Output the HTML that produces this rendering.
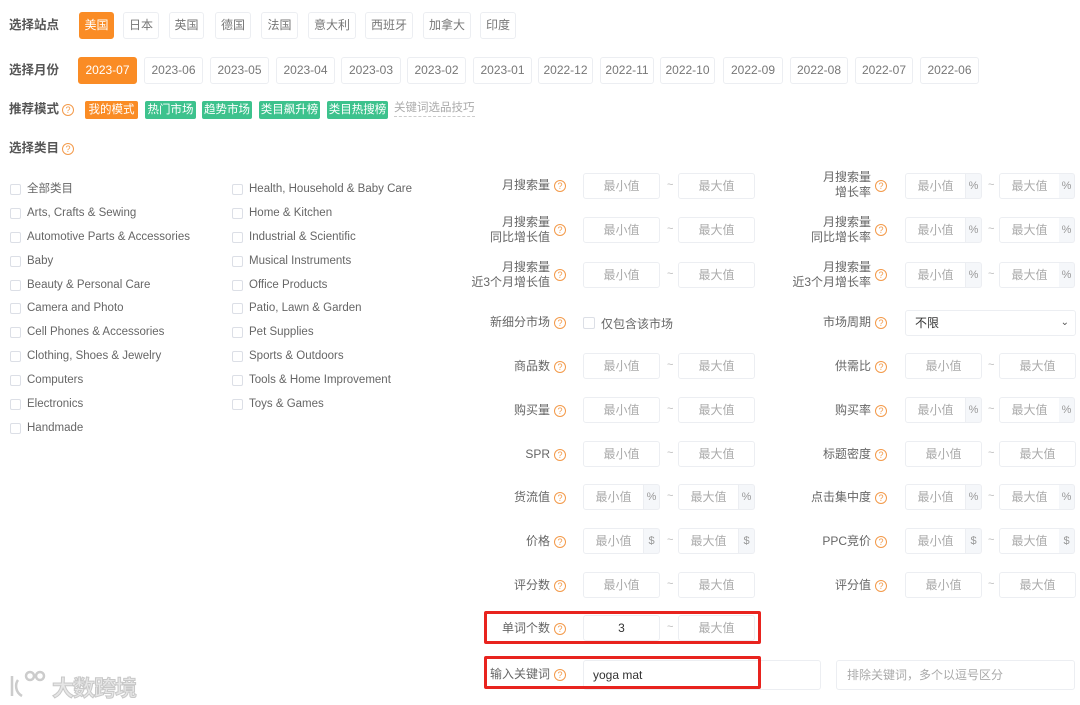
<!DOCTYPE html>
<html><head><meta charset="utf-8"><style>
*{box-sizing:border-box;margin:0;padding:0}
body{width:1080px;height:705px;background:#fff;position:relative;overflow:hidden;font-family:"Liberation Sans","Noto Sans CJK SC",sans-serif;color:#666;font-size:12px}
div,span{position:absolute}
.h{left:9px;font-size:12.5px;font-weight:bold;color:#555;line-height:16px}
.b{height:27px;border:1px solid #eceef2;border-radius:3px;line-height:25px;text-align:center;color:#777;font-size:12px}
.o{background:#fa8c25;border-color:#fa8c25;color:#fff}
.t{top:101px;height:18px;line-height:18px;color:#fff;font-size:11.5px;text-align:center;border-radius:2px;background:#3dc28d;white-space:nowrap;overflow:hidden}
.q{width:12px;height:12px;border:1px solid #f39a4a;border-radius:50%;color:#f39a4a;font-size:9px;line-height:10px;text-align:center}
.cb{width:11px;height:11px;border:1px solid #dcdfe6;border-radius:2px}
.c{font-size:11.5px;color:#666;font-family:"Liberation Sans","Noto Sans CJK SC",sans-serif;line-height:14px}
.ll{text-align:right;font-size:12px;color:#666;line-height:15px}
.in{height:26px;border:1px solid #eceef2;border-radius:3px;text-align:center;line-height:24px;color:#aaa;font-size:12px}
.ad{height:26px;width:16px;background:#f5f7fa;border:1px solid #eceef2;border-left:none;border-radius:0 3px 3px 0;text-align:center;line-height:24px;color:#999;font-size:11px}
.tl{color:#bbb;font-size:11px}
.red{border:3px solid #e8231e;border-radius:2px}
</style></head><body>
<div class="h" style="top:17px">选择站点</div>
<div class="b o" style="left:79px;top:12px;width:35px">美国</div>
<div class="b" style="left:123px;top:12px;width:36px">日本</div>
<div class="b" style="left:169px;top:12px;width:35px">英国</div>
<div class="b" style="left:215px;top:12px;width:36px">德国</div>
<div class="b" style="left:261px;top:12px;width:37px">法国</div>
<div class="b" style="left:308px;top:12px;width:48px">意大利</div>
<div class="b" style="left:365px;top:12px;width:48px">西班牙</div>
<div class="b" style="left:423px;top:12px;width:48px">加拿大</div>
<div class="b" style="left:480px;top:12px;width:36px">印度</div>

<div class="h" style="top:62px">选择月份</div>
<div class="b o" style="left:78px;top:57px;width:59px">2023-07</div>
<div class="b" style="left:144px;top:57px;width:59px">2023-06</div>
<div class="b" style="left:210px;top:57px;width:59px">2023-05</div>
<div class="b" style="left:276px;top:57px;width:59px">2023-04</div>
<div class="b" style="left:341px;top:57px;width:60px">2023-03</div>
<div class="b" style="left:407px;top:57px;width:59px">2023-02</div>
<div class="b" style="left:473px;top:57px;width:59px">2023-01</div>
<div class="b" style="left:538px;top:57px;width:55px">2022-12</div>
<div class="b" style="left:600px;top:57px;width:54px">2022-11</div>
<div class="b" style="left:660px;top:57px;width:55px">2022-10</div>
<div class="b" style="left:723px;top:57px;width:60px">2022-09</div>
<div class="b" style="left:790px;top:57px;width:58px">2022-08</div>
<div class="b" style="left:855px;top:57px;width:58px">2022-07</div>
<div class="b" style="left:920px;top:57px;width:59px">2022-06</div>

<div class="h" style="top:101px">推荐模式</div><div class="q" style="left:62px;top:104px">?</div>
<div class="t" style="left:85px;width:53px;background:#fa8c25">我的模式</div>
<div class="t" style="left:145px;width:51px">热门市场</div>
<div class="t" style="left:202px;width:50px">趋势市场</div>
<div class="t" style="left:259px;width:61px">类目飙升榜</div>
<div class="t" style="left:327px;width:61px">类目热搜榜</div>
<div style="left:394px;top:101px;color:#aaa;border-bottom:1px dashed #ccc;line-height:15px;font-size:11.5px">关键词选品技巧</div>

<div class="h" style="top:140px">选择类目</div><div class="q" style="left:62px;top:143px">?</div>

<div class="cb" style="left:10px;top:184px"></div><div class="c" style="left:27px;top:182px">全部类目</div>
<div class="cb" style="left:10px;top:208px"></div><div class="c" style="left:27px;top:206px">Arts, Crafts &amp; Sewing</div>
<div class="cb" style="left:10px;top:232px"></div><div class="c" style="left:27px;top:230px">Automotive Parts &amp; Accessories</div>
<div class="cb" style="left:10px;top:256px"></div><div class="c" style="left:27px;top:254px">Baby</div>
<div class="cb" style="left:10px;top:280px"></div><div class="c" style="left:27px;top:278px">Beauty &amp; Personal Care</div>
<div class="cb" style="left:10px;top:303px"></div><div class="c" style="left:27px;top:301px">Camera and Photo</div>
<div class="cb" style="left:10px;top:327px"></div><div class="c" style="left:27px;top:325px">Cell Phones &amp; Accessories</div>
<div class="cb" style="left:10px;top:351px"></div><div class="c" style="left:27px;top:349px">Clothing, Shoes &amp; Jewelry</div>
<div class="cb" style="left:10px;top:375px"></div><div class="c" style="left:27px;top:373px">Computers</div>
<div class="cb" style="left:10px;top:399px"></div><div class="c" style="left:27px;top:397px">Electronics</div>
<div class="cb" style="left:10px;top:423px"></div><div class="c" style="left:27px;top:421px">Handmade</div>
<div class="cb" style="left:232px;top:184px"></div><div class="c" style="left:249px;top:182px">Health, Household &amp; Baby Care</div>
<div class="cb" style="left:232px;top:208px"></div><div class="c" style="left:249px;top:206px">Home &amp; Kitchen</div>
<div class="cb" style="left:232px;top:232px"></div><div class="c" style="left:249px;top:230px">Industrial &amp; Scientific</div>
<div class="cb" style="left:232px;top:256px"></div><div class="c" style="left:249px;top:254px">Musical Instruments</div>
<div class="cb" style="left:232px;top:280px"></div><div class="c" style="left:249px;top:278px">Office Products</div>
<div class="cb" style="left:232px;top:303px"></div><div class="c" style="left:249px;top:301px">Patio, Lawn &amp; Garden</div>
<div class="cb" style="left:232px;top:327px"></div><div class="c" style="left:249px;top:325px">Pet Supplies</div>
<div class="cb" style="left:232px;top:351px"></div><div class="c" style="left:249px;top:349px">Sports &amp; Outdoors</div>
<div class="cb" style="left:232px;top:375px"></div><div class="c" style="left:249px;top:373px">Tools &amp; Home Improvement</div>
<div class="cb" style="left:232px;top:399px"></div><div class="c" style="left:249px;top:397px">Toys &amp; Games</div>

<div class="ll" style="right:530px;top:178px">月搜索量</div><div class="q" style="left:554px;top:180px">?</div>
<div class="in" style="left:583px;top:173px;width:77px">最小值</div><span class="tl" style="left:667px;top:179px">~</span><div class="in" style="left:678px;top:173px;width:77px">最大值</div>

<div class="ll" style="right:530px;top:215px">月搜索量<br>同比增长值</div><div class="q" style="left:554px;top:224px">?</div>
<div class="in" style="left:583px;top:217px;width:77px">最小值</div><span class="tl" style="left:667px;top:223px">~</span><div class="in" style="left:678px;top:217px;width:77px">最大值</div>

<div class="ll" style="right:530px;top:260px">月搜索量<br>近3个月增长值</div><div class="q" style="left:554px;top:269px">?</div>
<div class="in" style="left:583px;top:262px;width:77px">最小值</div><span class="tl" style="left:667px;top:268px">~</span><div class="in" style="left:678px;top:262px;width:77px">最大值</div>

<div class="ll" style="right:530px;top:315px">新细分市场</div><div class="q" style="left:554px;top:317px">?</div>
<div class="cb" style="left:583px;top:317px;width:12px;height:12px"></div><span style="left:601px;top:315px;color:#666">仅包含该市场</span>

<div class="ll" style="right:530px;top:359px">商品数</div><div class="q" style="left:554px;top:361px">?</div>
<div class="in" style="left:583px;top:353px;width:77px">最小值</div><span class="tl" style="left:667px;top:359px">~</span><div class="in" style="left:678px;top:353px;width:77px">最大值</div>

<div class="ll" style="right:530px;top:403px">购买量</div><div class="q" style="left:554px;top:405px">?</div>
<div class="in" style="left:583px;top:397px;width:77px">最小值</div><span class="tl" style="left:667px;top:403px">~</span><div class="in" style="left:678px;top:397px;width:77px">最大值</div>

<div class="ll" style="right:530px;top:447px">SPR</div><div class="q" style="left:554px;top:449px">?</div>
<div class="in" style="left:583px;top:441px;width:77px">最小值</div><span class="tl" style="left:667px;top:447px">~</span><div class="in" style="left:678px;top:441px;width:77px">最大值</div>

<div class="ll" style="right:530px;top:490px">货流值</div><div class="q" style="left:554px;top:492px">?</div>
<div class="in" style="left:583px;top:484px;width:61px;border-radius:3px 0 0 3px">最小值</div><div class="ad" style="left:644px;top:484px">%</div><span class="tl" style="left:667px;top:490px">~</span><div class="in" style="left:678px;top:484px;width:61px;border-radius:3px 0 0 3px">最大值</div><div class="ad" style="left:739px;top:484px">%</div>

<div class="ll" style="right:530px;top:534px">价格</div><div class="q" style="left:554px;top:536px">?</div>
<div class="in" style="left:583px;top:528px;width:61px;border-radius:3px 0 0 3px">最小值</div><div class="ad" style="left:644px;top:528px">$</div><span class="tl" style="left:667px;top:534px">~</span><div class="in" style="left:678px;top:528px;width:61px;border-radius:3px 0 0 3px">最大值</div><div class="ad" style="left:739px;top:528px">$</div>

<div class="ll" style="right:530px;top:578px">评分数</div><div class="q" style="left:554px;top:580px">?</div>
<div class="in" style="left:583px;top:572px;width:77px">最小值</div><span class="tl" style="left:667px;top:578px">~</span><div class="in" style="left:678px;top:572px;width:77px">最大值</div>

<div class="ll" style="right:530px;top:621px">单词个数</div><div class="q" style="left:554px;top:623px">?</div>
<div class="in" style="left:583px;top:615px;width:77px;color:#333">3</div><span class="tl" style="left:667px;top:621px">~</span><div class="in" style="left:678px;top:615px;width:77px">最大值</div>
<div class="red" style="left:484px;top:611px;width:277px;height:33px"></div>

<div class="ll" style="right:530px;top:667px">输入关键词</div><div class="q" style="left:554px;top:669px">?</div>
<div class="in" style="left:583px;top:660px;width:238px;height:30px;text-align:left;padding-left:9px;line-height:28px;color:#333">yoga mat</div>
<div class="in" style="left:836px;top:660px;width:239px;height:30px;text-align:left;padding-left:10px;line-height:28px">排除关键词，多个以逗号区分</div>
<div class="red" style="left:484px;top:656px;width:277px;height:33px"></div>

<div class="ll" style="right:209px;top:170px">月搜索量<br>增长率</div><div class="q" style="left:875px;top:180px">?</div>
<div class="in" style="left:905px;top:173px;width:61px;border-radius:3px 0 0 3px">最小值</div><div class="ad" style="left:966px;top:173px">%</div><span class="tl" style="left:988px;top:179px">~</span><div class="in" style="left:999px;top:173px;width:61px;border-radius:3px 0 0 3px">最大值</div><div class="ad" style="left:1059px;top:173px">%</div>

<div class="ll" style="right:209px;top:215px">月搜索量<br>同比增长率</div><div class="q" style="left:875px;top:224px">?</div>
<div class="in" style="left:905px;top:217px;width:61px;border-radius:3px 0 0 3px">最小值</div><div class="ad" style="left:966px;top:217px">%</div><span class="tl" style="left:988px;top:223px">~</span><div class="in" style="left:999px;top:217px;width:61px;border-radius:3px 0 0 3px">最大值</div><div class="ad" style="left:1059px;top:217px">%</div>

<div class="ll" style="right:209px;top:260px">月搜索量<br>近3个月增长率</div><div class="q" style="left:875px;top:269px">?</div>
<div class="in" style="left:905px;top:262px;width:61px;border-radius:3px 0 0 3px">最小值</div><div class="ad" style="left:966px;top:262px">%</div><span class="tl" style="left:988px;top:268px">~</span><div class="in" style="left:999px;top:262px;width:61px;border-radius:3px 0 0 3px">最大值</div><div class="ad" style="left:1059px;top:262px">%</div>

<div class="ll" style="right:209px;top:315px">市场周期</div><div class="q" style="left:875px;top:317px">?</div>
<div class="in" style="left:905px;top:310px;width:171px;height:26px;text-align:left;padding-left:9px;color:#333">不限<span style="right:6px;top:0;color:#555;font-size:10px">&#8964;</span></div>

<div class="ll" style="right:209px;top:359px">供需比</div><div class="q" style="left:875px;top:361px">?</div>
<div class="in" style="left:905px;top:353px;width:77px">最小值</div><span class="tl" style="left:988px;top:359px">~</span><div class="in" style="left:999px;top:353px;width:77px">最大值</div>

<div class="ll" style="right:209px;top:403px">购买率</div><div class="q" style="left:875px;top:405px">?</div>
<div class="in" style="left:905px;top:397px;width:61px;border-radius:3px 0 0 3px">最小值</div><div class="ad" style="left:966px;top:397px">%</div><span class="tl" style="left:988px;top:403px">~</span><div class="in" style="left:999px;top:397px;width:61px;border-radius:3px 0 0 3px">最大值</div><div class="ad" style="left:1059px;top:397px">%</div>

<div class="ll" style="right:209px;top:447px">标题密度</div><div class="q" style="left:875px;top:449px">?</div>
<div class="in" style="left:905px;top:441px;width:77px">最小值</div><span class="tl" style="left:988px;top:447px">~</span><div class="in" style="left:999px;top:441px;width:77px">最大值</div>

<div class="ll" style="right:209px;top:490px">点击集中度</div><div class="q" style="left:875px;top:492px">?</div>
<div class="in" style="left:905px;top:484px;width:61px;border-radius:3px 0 0 3px">最小值</div><div class="ad" style="left:966px;top:484px">%</div><span class="tl" style="left:988px;top:490px">~</span><div class="in" style="left:999px;top:484px;width:61px;border-radius:3px 0 0 3px">最大值</div><div class="ad" style="left:1059px;top:484px">%</div>

<div class="ll" style="right:209px;top:534px">PPC竞价</div><div class="q" style="left:875px;top:536px">?</div>
<div class="in" style="left:905px;top:528px;width:61px;border-radius:3px 0 0 3px">最小值</div><div class="ad" style="left:966px;top:528px">$</div><span class="tl" style="left:988px;top:534px">~</span><div class="in" style="left:999px;top:528px;width:61px;border-radius:3px 0 0 3px">最大值</div><div class="ad" style="left:1059px;top:528px">$</div>

<div class="ll" style="right:209px;top:578px">评分值</div><div class="q" style="left:875px;top:580px">?</div>
<div class="in" style="left:905px;top:572px;width:77px">最小值</div><span class="tl" style="left:988px;top:578px">~</span><div class="in" style="left:999px;top:572px;width:77px">最大值</div>

<svg style="position:absolute;left:8px;top:668px" width="44" height="32" viewBox="0 0 44 32"><g fill="none" stroke="#ccc" stroke-width="2.5"><path d="M4 8v20"/><path d="M10 12c-3 4-3 12 4 16"/><circle cx="22" cy="8" r="4"/><circle cx="32" cy="8" r="4"/></g></svg>
<div style="left:52px;top:671px;font-size:22px;font-weight:bold;color:#e6e6e6;-webkit-text-stroke:1px #c8c8c8;letter-spacing:-1px">大数跨境</div>
</body></html>
